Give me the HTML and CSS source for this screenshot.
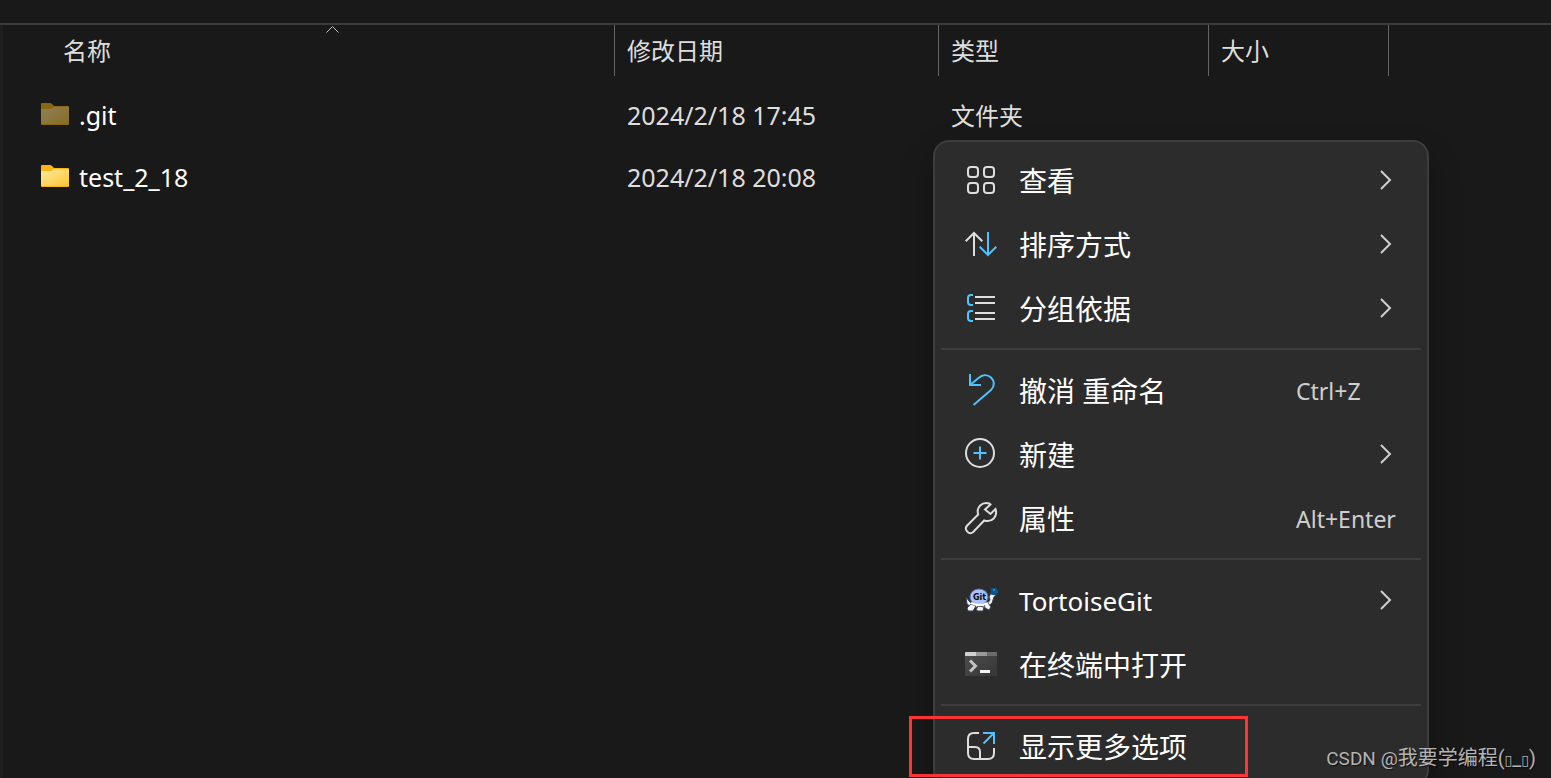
FILE: index.html
```html
<!DOCTYPE html>
<html lang="zh-CN">
<head>
    <meta charset="UTF-8">
    <meta name="viewport" content="width=device-width, initial-scale=1.0">
    <title>文件夹</title>
    <link rel="stylesheet" href="styles.css">
</head>
<body>
    <div class="toolbar"></div>
    <main class="explorer">
        <table class="files">
            <colgroup>
                <col class="col-name">
                <col class="col-date">
                <col class="col-type">
                <col class="col-size">
                <col>
            </colgroup>
            <thead>
                <tr>
                    <th>
                        <div class="sorted">
                            名称
                            <svg class="sort-mark" width="14" height="8" viewBox="0 0 14 8"><path d="M.5 7.500l6-6 6 6"/></svg>
                        </div>
                    </th>
                    <th>修改日期</th>
                    <th>类型</th>
                    <th>大小</th>
                    <td></td>
                </tr>
            </thead>
            <tbody>
                <tr>
                    <td>
                        <div class="file">
                            <svg width="28" height="28" viewBox="0 0 28 28">
                                <path d="M0 2q0-1 1-1h8q1 0 2 1l2 2h14q1 0 1 1v17q0 1-1 1H1q-1 0-1-1z" fill="#8a6713"/>
                                <path d="M0 7h10l3-2h15v17H0z" fill="url(#folder-dim)"/>
                                <defs><linearGradient id="folder-dim" x1="0" y1="0" x2="1" y2="1"><stop offset="0" stop-color="#8e8058"/><stop offset="1" stop-color="#8a6c22"/></linearGradient></defs>
                            </svg>
                            <span>.git</span>
                        </div>
                    </td>
                    <td class="date">2024/2/18 17:45</td>
                    <td>文件夹</td>
                    <td></td>
                    <td></td>
                </tr>
                <tr>
                    <td>
                        <div class="file">
                            <svg width="28" height="28" viewBox="0 0 28 28">
                                <path d="M0 2q0-1 1-1h8q1 0 2 1l2 2h14q1 0 1 1v17q0 1-1 1H1q-1 0-1-1z" fill="#fdb515"/>
                                <path d="M0 7h10l3-2h15v17H0z" fill="url(#folder)"/>
                                <defs><linearGradient id="folder" x1="0" y1="0" x2="1" y2="1"><stop offset="0" stop-color="#ffe9a0"/><stop offset="1" stop-color="#ffc733"/></linearGradient></defs>
                            </svg>
                            <span>test_2_18</span>
                        </div>
                    </td>
                    <td class="date">2024/2/18 20:08</td>
                    <td></td>
                    <td></td>
                    <td></td>
                </tr>
            </tbody>
        </table>
    </main>

    <div class="menu">
        <button type="button" class="item">
            <svg class="icon" viewBox="0 0 32 32"><rect x="3" y="3" width="10" height="10" rx="3"/><rect x="19" y="3" width="10" height="10" rx="3"/><rect x="3" y="19" width="10" height="10" rx="3"/><rect x="19" y="19" width="10" height="10" rx="3"/></svg>
            <span class="label">查看</span>
            <svg class="chevron" viewBox="0 0 24 24"><path d="M7 3l9 9-9 9"/></svg>
        </button>
        <button type="button" class="item">
            <svg class="icon" viewBox="0 0 32 32"><path d="M9 28V5M.7 13.300L9 5l8.300 8.300"/><path class="blue" d="M23 4v23M14.700 18.700L23 27l8.300-8.300"/></svg>
            <span class="label">排序方式</span>
            <svg class="chevron" viewBox="0 0 24 24"><path d="M7 3l9 9-9 9"/></svg>
        </button>
        <button type="button" class="item">
            <svg class="icon" viewBox="0 0 32 32"><path d="M10 5h20M10 11h20M10 21h20M10 27h20"/><path class="blue" d="M8 3H6Q3 3 3 6v4q0 3 3 3h2M8 19H6q-3 0-3 3v4q0 3 3 3h2"/></svg>
            <span class="label">分组依据</span>
            <svg class="chevron" viewBox="0 0 24 24"><path d="M7 3l9 9-9 9"/></svg>
        </button>
        <hr>
        <button type="button" class="item">
            <svg class="icon" viewBox="0 0 32 32"><path class="blue" d="M5 0v11h11M5 11l8.500-7c4-3.500 9-3.700 12.500-.5s4 8.500 0 12.500L8.500 31"/></svg>
            <span class="label">撤消 重命名</span>
            <kbd>Ctrl+Z</kbd>
        </button>
        <button type="button" class="item">
            <svg class="icon" viewBox="0 0 32 32"><circle cx="15" cy="15" r="14"/><path class="blue" d="M15 8.500v13M8.500 15h13"/></svg>
            <span class="label">新建</span>
            <svg class="chevron" viewBox="0 0 24 24"><path d="M7 3l9 9-9 9"/></svg>
        </button>
        <button type="button" class="item">
            <svg class="icon" viewBox="0 0 32 32"><path d="M24.500 1.500C17-1 11 5.500 13.200 12.500L2.200 23.500C-1.500 27.500 4 33.500 8.200 30L19.200 18.500C27 21 33 14.500 30.500 7L25.500 12 20 7.500 25.500 2.500z"/></svg>
            <span class="label">属性</span>
            <kbd>Alt+Enter</kbd>
        </button>
        <hr>
        <button type="button" class="item">
            <svg class="icon tortoise" viewBox="0 0 32 32">
                <g fill="#f4f4f0" stroke="#39405a" stroke-width="1">
                    <path d="M1 13l3 4 3 3h15l3-4-1-3 3-6 4-2 2 3-4 5-2 6-6 5-15-1-4-3z"/>
                    <path d="M6 20l-4 4 1 3h5l3-5zM13 22l-2 4 2 1h5l1-4zM19 20l1 4 4 2 2-3-3-4z"/>
                </g>
                <ellipse cx="14" cy="13" rx="9" ry="8" fill="#a9c2fb" stroke="#5d70a5" stroke-width="1"/>
                <path d="M6 19q8 4 17 0" fill="none" stroke="#fff" stroke-width="2"/>
                <rect x="26" y="4" width="6" height="7" rx="1" fill="#075689" stroke="none"/>
                <path d="M28 6h2" stroke="#62b8e7" stroke-width="1"/>
                <text x="8" y="16">Git</text>
            </svg>
            <span class="label latin">TortoiseGit</span>
            <svg class="chevron" viewBox="0 0 24 24"><path d="M7 3l9 9-9 9"/></svg>
        </button>
        <button type="button" class="item">
            <svg class="icon terminal" viewBox="0 0 32 32">
                <defs><linearGradient id="screen" x1="0" y1="0" x2="1" y2="1"><stop offset="0" stop-color="#4e4e4e"/><stop offset="1" stop-color="#363636"/></linearGradient></defs>
                <rect y="4" width="32" height="24" rx="1" fill="url(#screen)"/>
                <path d="M0 8V5q0-1 1-1h10v4z" fill="#cfcfcf"/><path d="M11 4h11v4H11z" fill="#999"/><path d="M22 4h9q1 0 1 1v3H22z" fill="#6b6b6b"/>
                <path d="M5 12.500l5.500 5.500L5 23.500" fill="none" stroke="#c4c4c4" stroke-width="3"/>
                <path d="M15 23.500h10" stroke="#f2f2f2" stroke-width="3"/>
            </svg>
            <span class="label">在终端中打开</span>
        </button>
        <hr>
        <button type="button" class="item">
            <svg class="icon" viewBox="0 0 32 32"><path d="M14 3H9Q3 3 3 9v14q0 6 6 6h14q6 0 6-6v-5M3 17h7q5 0 5 5v7"/><path class="blue" d="M18 3h11v11M18.500 13.500L29 3"/></svg>
            <span class="label">显示更多选项</span>
        </button>
    </div>

    <div class="highlight"></div>
    <div class="watermark"><span class="site">CSDN @</span>我要学编程(<span class="box">▯</span>_<span class="box">▯</span>)</div>
</body>
</html>
```
FILE: styles.css
```css
* {
    box-sizing: border-box;
}

body {
    position: relative;
    height: 100vh;
    margin: 0;
    overflow: hidden;
    display: flex;
    flex-direction: column;
    background-color: #191919;
    color: #dedede;
    font-family: "Noto Sans", "Noto Sans CJK SC", sans-serif;
    font-size: 24px;
}

.toolbar {
    height: 25px;
    border-bottom: 2px solid #3b3b3b;
}

.explorer {
    flex: 1;
    border-left: 3px solid #1f1f1f;
}

/* file list */
.files {
    width: 100%;
    table-layout: fixed;
    border-collapse: separate;
    border-spacing: 0;
    line-height: 32px;
}

.col-name {
    width: 612px;
}

.col-date {
    width: 324px;
}

.col-type {
    width: 270px;
}

.col-size {
    width: 180px;
}

.files th,
.files td {
    padding: 0 12px;
    text-align: left;
    font-weight: 400;
    white-space: nowrap;
}

.files th {
    height: 51px;
    border-right: 1px solid #636363;
}

.files th:first-child {
    padding: 0 0 0 48px;
}

.files tbody td {
    height: 62px;
}

.files tbody tr:first-child td {
    height: 71px;
    padding-top: 9px;
}

.files tbody td:first-child {
    padding-left: 38px;
}

.files .date {
    padding-bottom: 2px;
    font-size: 25px;
}

.sorted {
    position: relative;
    padding-left: 12px;
}

.sort-mark {
    position: absolute;
    top: -10px;
    left: calc(50% - 7px);
    fill: none;
    stroke: #c4c4c4;
}

.file {
    display: flex;
    align-items: center;
    gap: 10px;
    color: #fff;
    font-size: 25px;
}

.file span {
    padding-bottom: 2px;
}

/* context menu */
.menu {
    position: absolute;
    top: 140px;
    left: 933px;
    width: 496px;
    padding: 6px;
    background-color: #2c2c2c;
    border: 2px solid #3d3d3d;
    border-radius: 16px;
    box-shadow: 0 16px 32px rgba(0, 0, 0, 0.3);
}

.menu hr {
    height: 2px;
    margin: 8px 0;
    border: none;
    background-color: #3d3d3d;
}

.item {
    display: grid;
    grid-template-columns: 32px 1fr 102px;
    column-gap: 22px;
    align-items: center;
    width: 100%;
    height: 64px;
    padding: 0 23px 0 24px;
    background: none;
    border: none;
    border-radius: 8px;
    color: #fff;
    font-family: inherit;
    font-size: 28px;
    line-height: 40px;
    text-align: left;
    white-space: nowrap;
}

.item:hover {
    background-color: #383838;
}

.label,
.item kbd {
    padding-top: 2px;
}

.latin {
    font-size: 26px;
}

.icon {
    width: 32px;
    height: 32px;
    overflow: visible;
    fill: none;
    stroke: #dedede;
    stroke-width: 2;
}

.icon .blue {
    stroke: #4cc2ff;
}

.terminal {
    stroke: none;
}

.tortoise text {
    font-family: "DejaVu Sans", sans-serif;
    font-size: 8px;
    font-weight: 700;
    fill: #05070f;
    stroke: none;
}

.chevron {
    width: 24px;
    height: 24px;
    justify-self: end;
    fill: none;
    stroke: #cfcfcf;
    stroke-width: 2;
}

.item kbd {
    color: #cfcfcf;
    font-family: inherit;
    font-size: 23px;
}

.highlight {
    position: absolute;
    top: 716px;
    left: 909px;
    width: 339px;
    height: 61px;
    border: 3px solid #ff3535;
}

.watermark {
    position: absolute;
    right: 15px;
    bottom: 3px;
    color: #b4b4b4;
    font-family: Roboto, "Noto Sans CJK SC", sans-serif;
    font-size: 20px;
    line-height: 30px;
    text-shadow: 1px 1px 1px rgba(0, 0, 0, 0.6);
}

.site {
    font-size: 19px;
}

.box {
    font-family: "DejaVu Sans", sans-serif;
    font-size: 14px;
}
```
